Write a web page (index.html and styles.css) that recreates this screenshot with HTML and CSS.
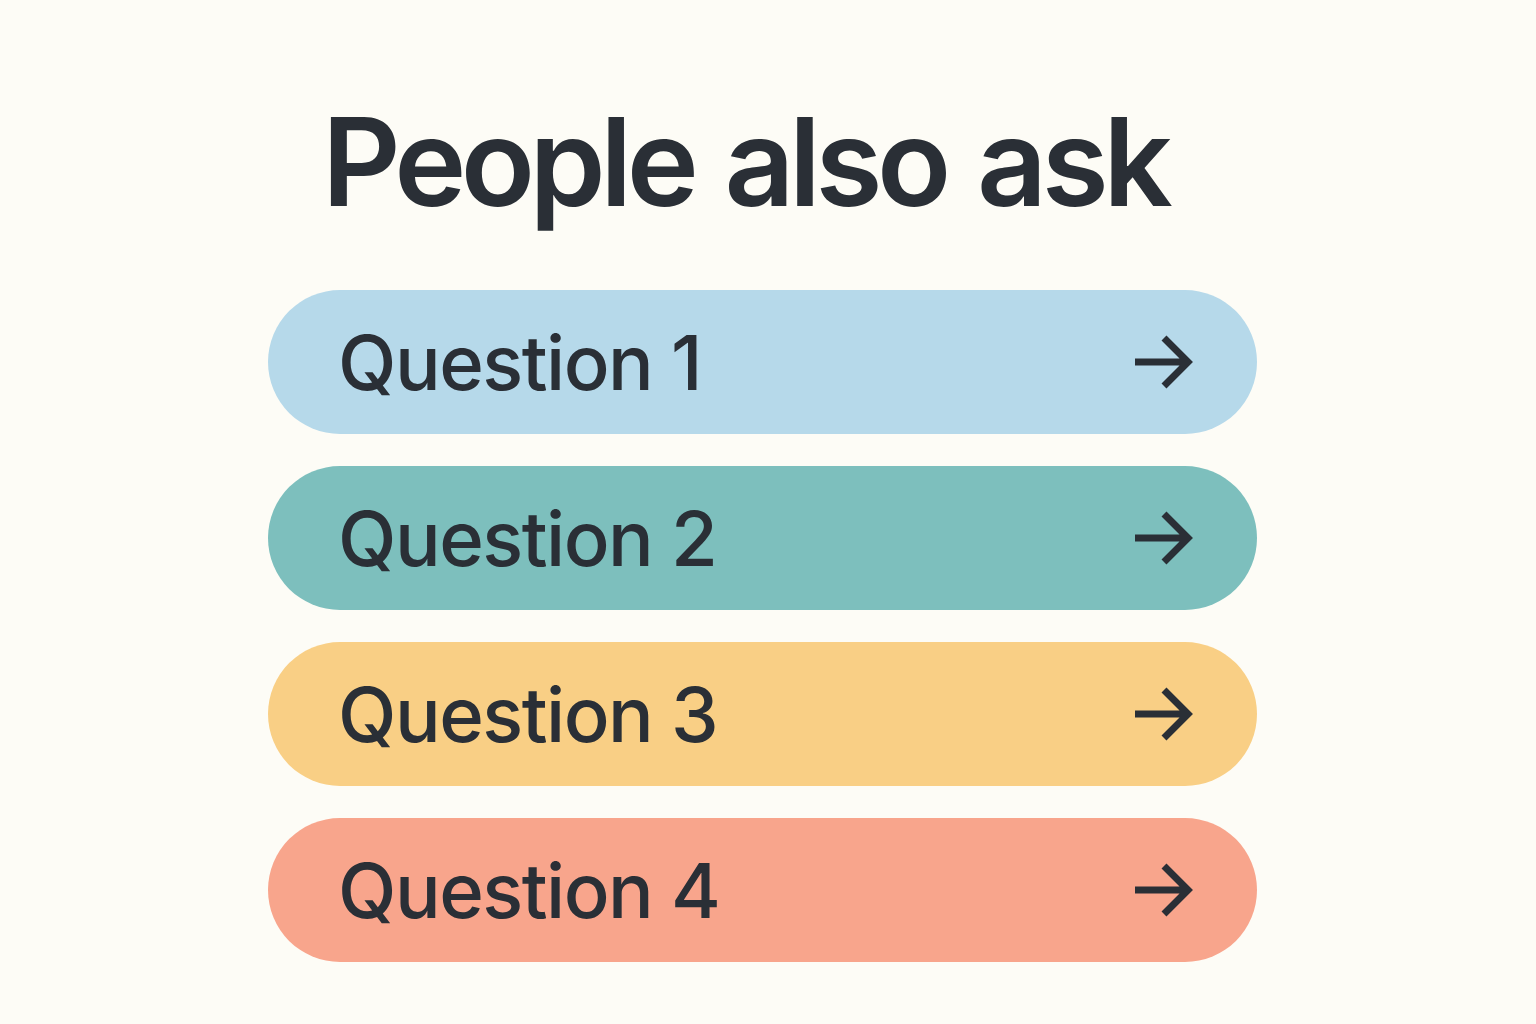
FILE: index.html
```html
<!DOCTYPE html>
<html lang="en">
<head>
  <meta charset="UTF-8" />
  <title>People also ask</title>
  <link rel="stylesheet" href="styles.css">
</head>
<body>

<div class="container">
  <h1>People also ask</h1>

  <div class="questions">
    <a class="question q-blue" href="#">
      <span>Question 1</span>
      <svg class="arrow" viewBox="0 0 60 56"><path d="M2 28H55M31 4L55 28L31 52" /></svg>
    </a>
    <a class="question q-teal" href="#">
      <span>Question 2</span>
      <svg class="arrow" viewBox="0 0 60 56"><path d="M2 28H55M31 4L55 28L31 52" /></svg>
    </a>
    <a class="question q-yellow" href="#">
      <span>Question 3</span>
      <svg class="arrow" viewBox="0 0 60 56"><path d="M2 28H55M31 4L55 28L31 52" /></svg>
    </a>
    <a class="question q-red" href="#">
      <span>Question 4</span>
      <svg class="arrow" viewBox="0 0 60 56"><path d="M2 28H55M31 4L55 28L31 52" /></svg>
    </a>
  </div>
</div>

</body>
</html>
```

FILE: styles.css
```css
body {
  font-family: Inter, "Noto Sans", sans-serif;
  background: #fdfcf6;
  color: #2a2f36;
  margin: 0;
}

.container {
  width: 989px;
  margin: 0 auto;
  padding-right: 11px;
}

h1 {
  margin: 0;
  padding: 87px 36px 0 0;
  font-size: 122px;
  font-weight: 600;
  letter-spacing: -5.5px;
  word-spacing: 6px;
  line-height: 150px;
  text-align: center;
}

.questions {
  margin-top: 53px;
  display: flex;
  flex-direction: column;
  gap: 32px;
}

.question {
  display: flex;
  align-items: center;
  justify-content: space-between;
  height: 144px;
  padding: 0 64px 0 70px;
  border-radius: 72px;
  color: #2a2f36;
  text-decoration: none;
  font-size: 76px;
  font-weight: 500;
  letter-spacing: -1.5px;
}

.arrow {
  width: 60px;
  height: 56px;
  fill: none;
  stroke: #2a2f36;
  stroke-width: 7;
}

.q-blue { background: #b6d9ea; }
.q-teal { background: #7dbfbd; }
.q-yellow { background: #f9cf85; }
.q-red { background: #f8a58c; }
```
